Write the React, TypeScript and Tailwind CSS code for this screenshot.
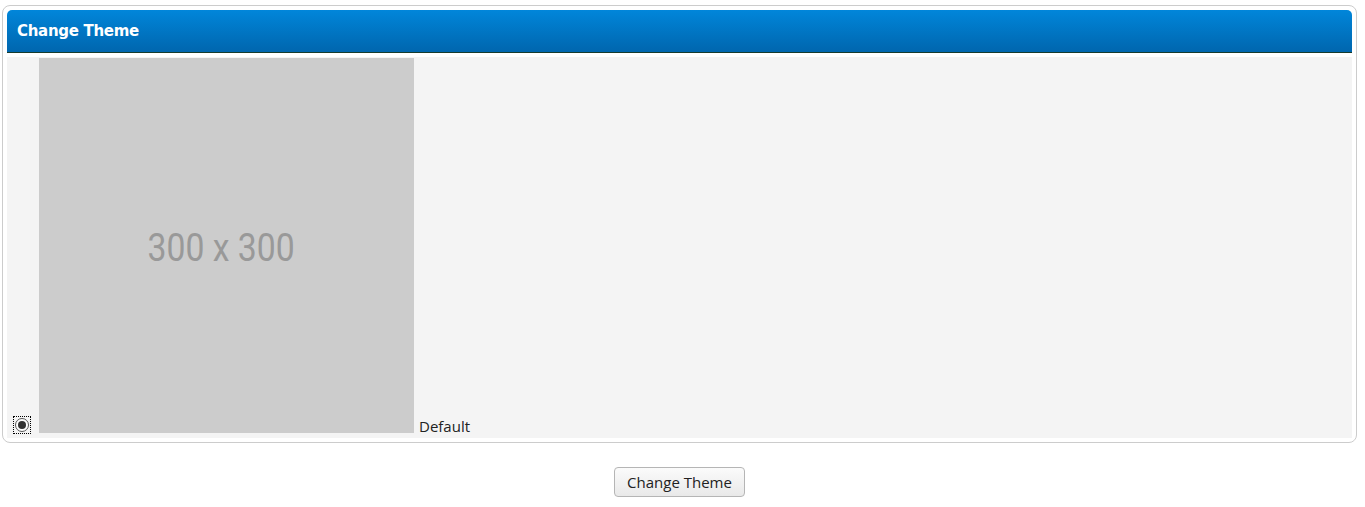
export default function App() {
  return (
    <div className="bg-white pt-[5px] pl-[2px] font-['Open_Sans',sans-serif]">
      <div className="w-[1355px] rounded-[8px] border border-[#cccccc] bg-white p-[4px]">
        <div className="flex h-[43px] items-center rounded-t-[5px] border-b border-[#163b2c] bg-gradient-to-b from-[#0186da] to-[#0066ae] pl-[10px]">
          <span className="font-['DejaVu_Sans',sans-serif] text-[15px] font-bold tracking-[-0.3px] text-white">Change Theme</span>
        </div>
        <div className="mt-[4px] flex h-[381px] items-end bg-[#f4f4f4] pb-[5px] pl-[6px]">
          <span className="mb-[-1px] flex h-[18px] w-[18px] items-center justify-center border border-dotted border-black">
            <span className="flex h-[14px] w-[14px] items-center justify-center rounded-full border border-[#555] bg-white">
              <span className="h-[8px] w-[8px] rounded-full bg-[#333]" />
            </span>
          </span>
          <div className="ml-[8px] flex h-[375px] w-[375px] items-center justify-center bg-[#cccccc] pt-[6px] pr-[10px]">
            <span className="scale-x-[0.865] font-['Roboto',sans-serif] text-[39px] text-[#999999]">300 x 300</span>
          </div>
          <span className="mb-[-2px] ml-[5px] text-[15px] leading-[18px] text-[#222]">Default</span>
        </div>
      </div>
      <div className="flex justify-center pt-[24px] pr-[8px]">
        <button className="h-[30px] rounded-[4px] border border-[#b5b5b5] bg-gradient-to-b from-[#fbfbfb] to-[#e9e9e9] px-[12px] text-[15px] text-[#222]">
          Change Theme
        </button>
      </div>
    </div>
  )
}
